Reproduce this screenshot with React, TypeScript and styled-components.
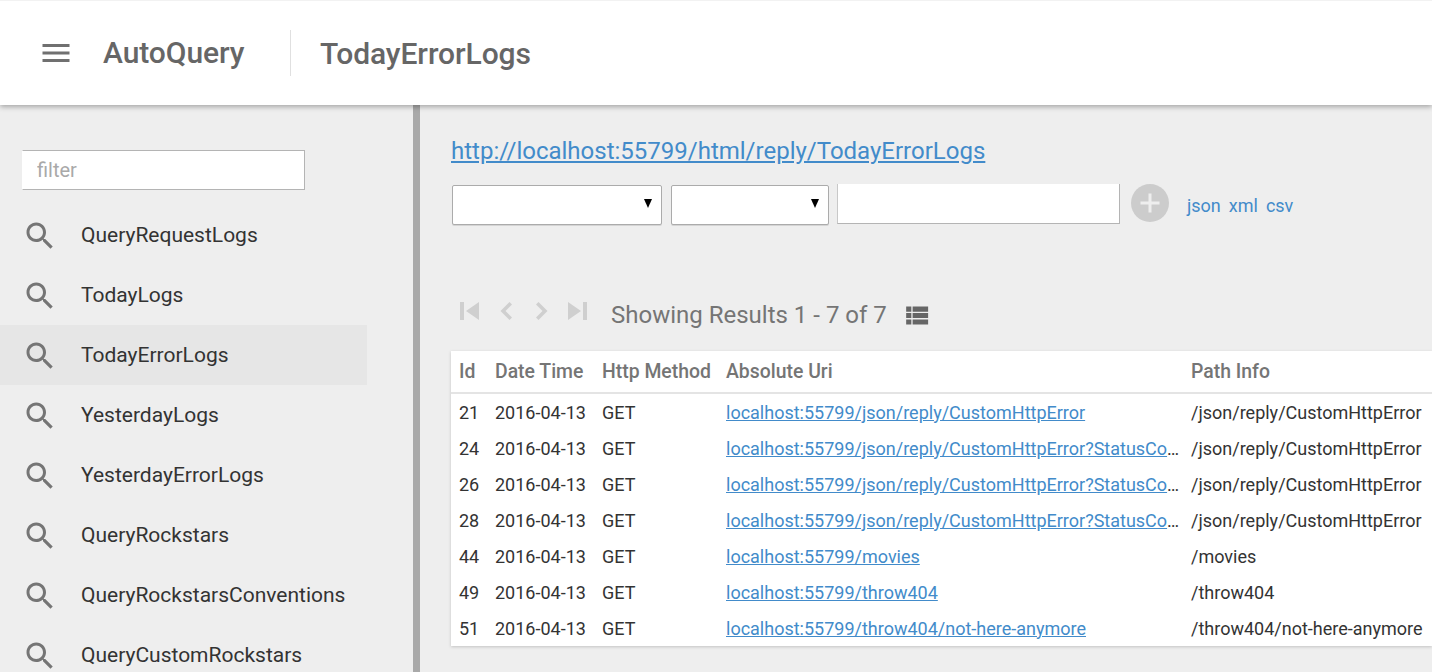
import React from "react";
import styled, { createGlobalStyle } from "styled-components";

const Global = createGlobalStyle`
  html, body { margin: 0; padding: 0; height: 100%; overflow: hidden; background: #eeeeee; }
  body { font-family: Roboto, "Liberation Sans", sans-serif; }
  #root { height: 100%; }
`;

const Page = styled.div`
  width: 1432px;
  height: 672px;
  display: flex;
  flex-direction: column;
  overflow: hidden;
`;

const Header = styled.header`
  flex: none;
  height: 105px;
  box-sizing: border-box;
  background: #fff;
  border-top: 1px solid #f2f2f2;
  box-shadow: 0 2px 5px rgba(0, 0, 0, 0.3);
  display: flex;
  align-items: center;
  padding-left: 37.5px;
  position: relative;
  z-index: 2;
  color: #666;
`;

const MenuIcon = styled.svg`
  width: 36px;
  height: 36px;
  fill: #707070;
  margin: 0 29.5px 1px 0;
  flex: none;
`;

const Brand = styled.div`
  font-size: 30px;
  font-weight: 500;
  letter-spacing: -0.07px;
  height: 46px;
  line-height: 46px;
  flex: none;
  border-right: 1px solid #e0e0e0;
  width: 187px;
`;

const Title = styled.div`
  font-size: 30px;
  font-weight: 500;
  letter-spacing: -0.07px;
  margin-left: 29px;
`;

const Body = styled.div`
  flex: 1;
  display: flex;
  min-height: 0;
`;

const Sidebar = styled.aside`
  flex: none;
  width: 413px;
  box-sizing: border-box;
  overflow: hidden;
  padding-top: 45px;
`;

const Divider = styled.div`
  flex: none;
  width: 7px;
  background: #a9a9a9;
`;

const Filter = styled.input`
  display: block;
  box-sizing: border-box;
  width: 283px;
  height: 40px;
  margin: 0 0 15px 22px;
  padding: 0 14px;
  border: 1px solid #b4b4b4;
  border-left-color: #fff;
  background: #fff;
  outline: none;
  font: 20px Roboto, sans-serif;
  &::placeholder { color: #a9a9a9; opacity: 1; }
`;

const NavItem = styled.div<{ $active?: boolean }>`
  width: 367px;
  height: 60px;
  display: flex;
  align-items: center;
  padding-left: 22px;
  box-sizing: border-box;
  background: ${(p) => (p.$active ? "#e6e6e6" : "transparent")};
  color: #333;
  font-size: 21px;
`;

const SearchIcon = styled.svg`
  width: 36px;
  height: 36px;
  fill: #757575;
  margin: 2px 23px 0 0;
  flex: none;
`;

const Main = styled.main`
  flex: 1;
  min-width: 0;
  padding: 30px 0 0 31px;
  overflow: hidden;
`;

const UrlLink = styled.a`
  display: block;
  font-size: 24px;
  line-height: 32px;
  color: #428bca;
  text-decoration: underline;
`;

const FormRow = styled.div`
  display: flex;
  align-items: center;
  margin: 18px 0 0 1px;
  height: 40px;
`;

const SelectBox = styled.div<{ $width: number; $gap: number }>`
  width: ${(p) => p.$width}px;
  height: 40px;
  box-sizing: border-box;
  background: #fff;
  border: 1px solid #ababab;
  border-radius: 2px;
  box-shadow: 0 1px 0 #d4d4d4;
  margin-right: ${(p) => p.$gap}px;
  display: flex;
  justify-content: flex-end;
  padding: 13px 9px 0 0;
  flex: none;
`;

const Caret = styled.span`
  width: 0;
  height: 0;
  border-left: 4px solid transparent;
  border-right: 4px solid transparent;
  border-top: 9px solid #000;
`;

const TextBox = styled.input`
  width: 283px;
  height: 40px;
  box-sizing: border-box;
  border: 0;
  border-right: 1px solid #b4b4b4;
  border-bottom: 1px solid #b4b4b4;
  border-left: 1px solid #c8c8c8;
  background: #fff;
  outline: none;
  flex: none;
  margin-bottom: 2px;
`;

const AddIcon = styled.svg`
  width: 38px;
  height: 38px;
  margin: 0 0 5px 11px;
  flex: none;
`;

const FormatLink = styled.a`
  color: #428bca;
  font-size: 18px;
  margin-right: 8px;
  &:first-of-type { margin-left: 18px; }
`;

const Pager = styled.div`
  display: flex;
  align-items: center;
  margin-top: 70px;
  height: 40px;
`;

const PagerIcon = styled.svg<{ $width: number; $gap: number }>`
  width: ${(p) => p.$width}px;
  height: 18px;
  fill: #cfcfcf;
  flex: none;
  margin: 0 0 8px ${(p) => p.$gap}px;
`;

const PagerText = styled.div`
  margin-left: 24px;
  color: #757575;
  font-size: 24px;
`;

const ListIcon = styled.svg`
  width: 31px;
  height: 31px;
  fill: #666;
  margin-left: 14px;
  flex: none;
`;

const Table = styled.table`
  margin-top: 16px;
  width: 981px;
  table-layout: fixed;
  border-collapse: collapse;
  background: #fff;
  box-shadow: 0 1px 3px rgba(0, 0, 0, 0.18);
  font-size: 18px;
`;

const Th = styled.th<{ $width: number }>`
  width: ${(p) => p.$width}px;
  height: 42px;
  padding: 0 0 1px 8px;
  box-sizing: border-box;
  text-align: left;
  font-weight: 500;
  font-size: 19.4px;
  color: #757575;
  border-bottom: 2px solid #e4e4e4;
  white-space: nowrap;
`;

const Td = styled.td`
  height: 36px;
  padding: 0 0 0 8px;
  color: #333;
  white-space: nowrap;
`;

const RowLink = styled.a`
  color: #428bca;
  text-decoration: underline;
`;

const navItems = [
  "QueryRequestLogs",
  "TodayLogs",
  "TodayErrorLogs",
  "YesterdayLogs",
  "YesterdayErrorLogs",
  "QueryRockstars",
  "QueryRockstarsConventions",
  "QueryCustomRockstars",
];

const long = "localhost:55799/json/reply/CustomHttpError?StatusCo";
const rows = [
  { id: "21", uri: "localhost:55799/json/reply/CustomHttpError", path: "/json/reply/CustomHttpError" },
  { id: "24", uri: long, cut: true, path: "/json/reply/CustomHttpError" },
  { id: "26", uri: long, cut: true, path: "/json/reply/CustomHttpError" },
  { id: "28", uri: long, cut: true, path: "/json/reply/CustomHttpError" },
  { id: "44", uri: "localhost:55799/movies", path: "/movies" },
  { id: "49", uri: "localhost:55799/throw404", path: "/throw404" },
  { id: "51", uri: "localhost:55799/throw404/not-here-anymore", path: "/throw404/not-here-anymore" },
];

const SEARCH =
  "M15.5 14h-.79l-.28-.27C15.41 12.59 16 11.11 16 9.5 16 5.91 13.09 3 9.5 3S3 5.91 3 9.5 5.91 16 9.5 16c1.61 0 3.09-.59 4.23-1.57l.27.28v.79l5 4.99L20.49 19l-4.99-5zm-6 0C7.01 14 5 11.99 5 9.5S7.01 5 9.5 5 14 7.01 14 9.5 11.99 14 9.5 14z";

export default function App() {
  return (
    <Page>
      <Global />
      <Header>
        <MenuIcon viewBox="0 0 24 24">
          <path d="M3 18h18v-2H3v2zm0-5h18v-2H3v2zm0-7v2h18V6H3z" />
        </MenuIcon>
        <Brand>AutoQuery</Brand>
        <Title>TodayErrorLogs</Title>
      </Header>
      <Body>
        <Sidebar>
          <Filter placeholder="filter" />
          {navItems.map((n) => (
            <NavItem key={n} $active={n === "TodayErrorLogs"}>
              <SearchIcon viewBox="0 0 24 24">
                <path d={SEARCH} />
              </SearchIcon>
              {n}
            </NavItem>
          ))}
        </Sidebar>
        <Divider />
        <Main>
          <UrlLink>http://localhost:55799/html/reply/TodayErrorLogs</UrlLink>
          <FormRow>
            <SelectBox $width={210} $gap={9}><Caret /></SelectBox>
            <SelectBox $width={158} $gap={8}><Caret /></SelectBox>
            <TextBox />
            <AddIcon viewBox="0 0 38 38">
              <circle cx="19" cy="19" r="19" fill="#cccccc" />
              <path d="M17.5 9.5h3v8h8v3h-8v8h-3v-8h-8v-3h8z" fill="#eeeeee" />
            </AddIcon>
            <FormatLink>json</FormatLink>
            <FormatLink>xml</FormatLink>
            <FormatLink>csv</FormatLink>
          </FormRow>
          <Pager>
            <PagerIcon viewBox="0 0 19 18" $width={19} $gap={9}><path d="M0 0h4v18H0zM6 9l13-9v18z" /></PagerIcon>
            <PagerIcon viewBox="0 0 12 18" $width={12} $gap={20.5}><path d="M9.5 0L12 2.5 5.5 9l6.5 6.5L9.5 18 .5 9z" /></PagerIcon>
            <PagerIcon viewBox="0 0 12 18" $width={12} $gap={24.5}><path d="M2.5 0L0 2.5 6.5 9 0 15.5 2.5 18l9-9z" /></PagerIcon>
            <PagerIcon viewBox="0 0 19 18" $width={19} $gap={20}><path d="M15 0h4v18h-4zM13 9L0 0v18z" /></PagerIcon>
            <PagerText>Showing Results 1 - 7 of 7</PagerText>
            <ListIcon viewBox="0 0 24 24">
              <path d="M4 14h4v-4H4v4zm0 5h4v-4H4v4zM4 9h4V5H4v4zm5 5h12v-4H9v4zm0 5h12v-4H9v4zM9 5v4h12V5H9z" />
            </ListIcon>
          </Pager>
          <Table>
            <thead>
              <tr>
                <Th $width={36}>Id</Th>
                <Th $width={107}>Date Time</Th>
                <Th $width={124}>Http Method</Th>
                <Th $width={465}>Absolute Uri</Th>
                <Th $width={249}>Path Info</Th>
              </tr>
            </thead>
            <tbody>
              {rows.map((r) => (
                <tr key={r.id}>
                  <Td>{r.id}</Td>
                  <Td>2016-04-13</Td>
                  <Td>GET</Td>
                  <Td><RowLink>{r.uri}</RowLink>{r.cut ? "…" : ""}</Td>
                  <Td>{r.path}</Td>
                </tr>
              ))}
            </tbody>
          </Table>
        </Main>
      </Body>
    </Page>
  );
}
